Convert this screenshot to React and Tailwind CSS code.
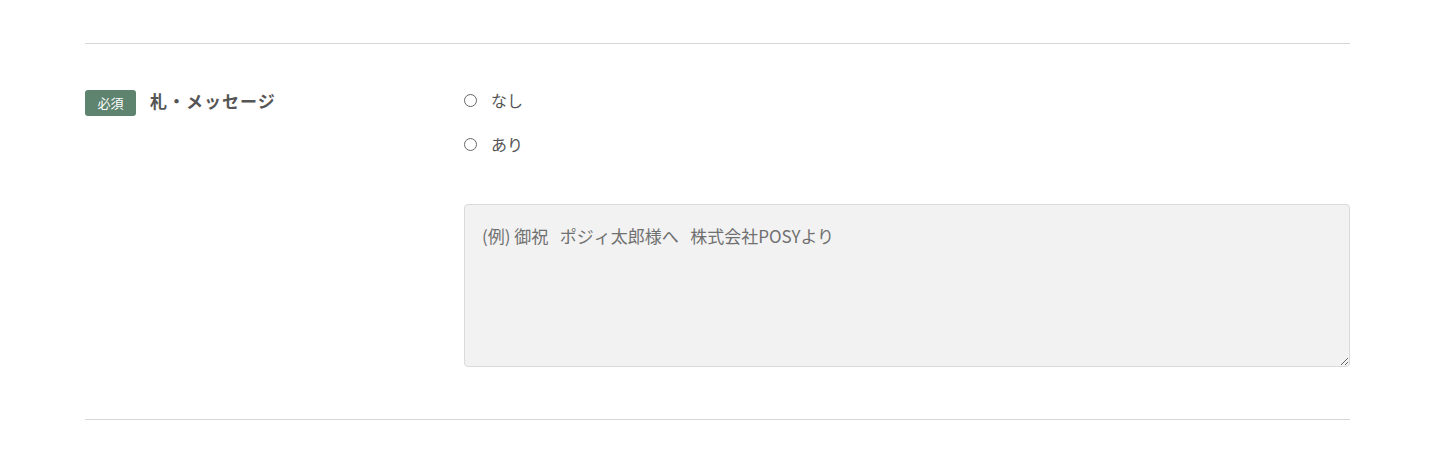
import { useState } from 'react'

const FONT = { fontFamily: '"Noto Sans CJK JP", "Noto Sans", sans-serif' }

function Radio({ label, checked, onChange }) {
  return (
    <label className="flex items-center h-[24px] cursor-pointer">
      <span className="w-[13px] h-[13px] rounded-full border border-[#666] bg-white flex items-center justify-center">
        {checked && <span className="w-[7px] h-[7px] rounded-full bg-[#555]" />}
      </span>
      <span className="ml-[14px] text-[16px] text-[#555] leading-none">{label}</span>
      <input type="radio" className="hidden" checked={checked} onChange={onChange} />
    </label>
  )
}

export default function App() {
  const [choice, setChoice] = useState(null)

  return (
    <div className="w-[1441px] h-[456px] bg-white" style={FONT}>
      <div className="mx-[85px] w-[1265px] pt-[43px]">
        {/* row */}
        <div className="border-t border-[#d6d6d6] border-b flex pt-[46px] pb-[52px]">
          <div className="w-[379px] flex items-start">
            <span className="w-[51px] h-[26px] rounded-[3px] bg-[#5e8470] text-white text-[13px] flex items-center justify-center">必須</span>
            <span className="ml-[14px] mt-[-2px] text-[17px] font-bold text-[#555] tracking-[0.06em]">札・メッセージ</span>
          </div>
          <div className="flex-1">
            <div className="flex flex-col gap-[20px] mt-[-2px]">
              <Radio label="なし" checked={choice === 'none'} onChange={() => setChoice('none')} />
              <Radio label="あり" checked={choice === 'yes'} onChange={() => setChoice('yes')} />
            </div>
            <textarea
              className="mt-[48px] block w-full h-[163px] bg-[#f2f2f2] border border-[#dadada] rounded-[4px] px-[17px] py-[18px] text-[17px] text-[#555] placeholder:text-[#707070] outline-none"
              style={FONT}
              placeholder="(例) 御祝   ポジィ太郎様へ   株式会社POSYより"
            />
          </div>
        </div>
      </div>
    </div>
  )
}
